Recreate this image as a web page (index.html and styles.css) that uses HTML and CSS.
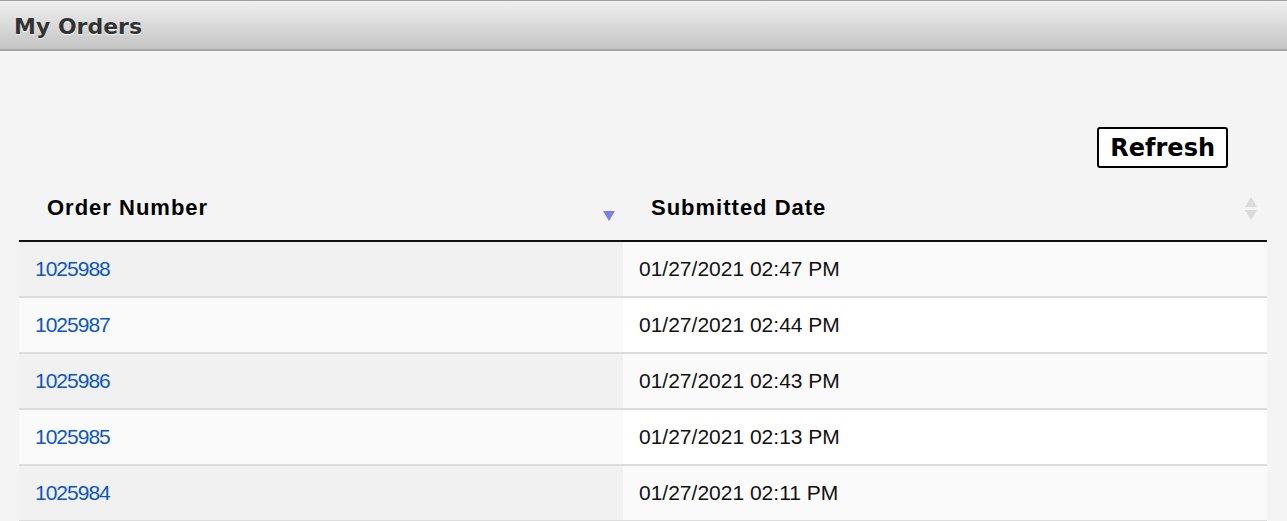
FILE: index.html
```html
<!DOCTYPE html>
<html>
<head>
<meta charset="utf-8">
<link rel="stylesheet" href="styles.css">
</head>
<body>
<div class="panel">
  <div class="panel-head"><h1 class="title">My Orders</h1></div>
  <div class="panel-body">
    <div class="toolbar"><button class="refresh">Refresh</button></div>
    <table class="orders">
      <thead>
        <tr>
          <th class="sort-desc">Order Number<span class="arrow-desc"></span></th>
          <th class="sortable">Submitted Date<span class="arrows"><span class="up"></span><span class="down"></span></span></th>
        </tr>
      </thead>
      <tbody>
        <tr class="odd"><td class="c1"><a href="#">1025988</a></td><td class="c2">01/27/2021 02:47 PM</td></tr>
        <tr class="even"><td class="c1"><a href="#">1025987</a></td><td class="c2">01/27/2021 02:44 PM</td></tr>
        <tr class="odd"><td class="c1"><a href="#">1025986</a></td><td class="c2">01/27/2021 02:43 PM</td></tr>
        <tr class="even"><td class="c1"><a href="#">1025985</a></td><td class="c2">01/27/2021 02:13 PM</td></tr>
        <tr class="odd"><td class="c1"><a href="#">1025984</a></td><td class="c2">01/27/2021 02:11 PM</td></tr>
      </tbody>
    </table>
  </div>
</div>
</body>
</html>
```
FILE: styles.css
```css
html, body { margin: 0; padding: 0; background: #f4f4f4; }
.panel { width: 1287px; }
.panel-head {
  height: 48px;
  border-top: 1px solid #a0a0a0;
  border-bottom: 2px solid #a6a6a6;
  background: linear-gradient(#efefef, #dcdcdc 45%, #c4c4c4);
  display: flex;
  align-items: center;
  padding-left: 14px;
}
.title {
  margin: 0;
  padding-top: 3px;
  font-family: "DejaVu Sans", Verdana, sans-serif;
  font-weight: bold;
  font-size: 22px;
  color: #333;
  text-shadow: 0 1px 0 #fff;
}
.panel-body { padding: 76px 20px 0 19px; }
.toolbar { display: flex; justify-content: flex-end; padding-right: 39px; height: 41px; }
.refresh {
  font-family: "DejaVu Sans", Verdana, sans-serif;
  font-weight: bold;
  font-size: 24px;
  color: #000;
  background: #fff;
  border: 2px solid #000;
  border-radius: 3px;
  padding: 0 11px;
  height: 41px;
}
.orders { width: 1248px; border-collapse: collapse; font-family: "Liberation Sans", Arial, sans-serif; }
.orders th {
  text-align: left;
  font-size: 22px;
  letter-spacing: 1px;
  font-weight: bold;
  color: #000;
  height: 73px;
  padding: 8px 0 0 28px;
  box-sizing: border-box;
  border-bottom: 2px solid #111;
  position: relative;
}
.orders th:first-child { width: 604px; }
.arrow-desc {
  position: absolute; right: 8px; top: 43px;
  width: 0; height: 0;
  border-left: 6px solid transparent; border-right: 6px solid transparent;
  border-top: 10px solid #7b7fe6;
}
.arrows { position: absolute; right: 10px; top: 29px; display: flex; flex-direction: column; gap: 3px; }
.arrows .up { width: 0; height: 0; border-left: 6px solid transparent; border-right: 6px solid transparent; border-bottom: 10px solid #dadada; }
.arrows .down { width: 0; height: 0; border-left: 6px solid transparent; border-right: 6px solid transparent; border-top: 10px solid #dadada; }
.orders td {
  height: 54px;
  padding: 0 0 0 16px;
  font-size: 21px;
  border-bottom: 2px solid #dddddd;
  color: #111;
}
.orders td.c1 { letter-spacing: -1px; }
.orders tr.odd .c1 { background: #f1f1f1; }
.orders tr.odd .c2 { background: #fafafa; }
.orders tr.even .c1 { background: #fafafa; }
.orders tr.even .c2 { background: #ffffff; }
.orders a { color: #0b55c4; text-decoration: none; }
```
